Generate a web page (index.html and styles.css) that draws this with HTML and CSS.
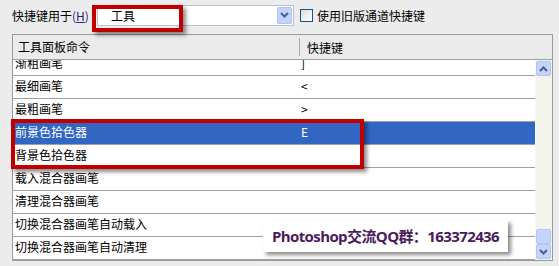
FILE: index.html
```html
<html>
<head>
  <meta charset="UTF-8">
  <title>快捷键</title>
  <link rel="stylesheet" href="styles.css">
</head>
<body>
  <div class="dialog">
    <div class="toolbar">
      <span class="label">快捷键用于<span class="mnemonic">(<u>H</u>)</span></span>
      <div class="select">
        <span class="select-value">工具</span>
        <span class="select-btn">
          <svg width="9" height="6" viewBox="0 0 9 6"><path d="M1 1 L4.5 4.5 L8 1" fill="none" stroke="#4d6185" stroke-width="2"/></svg>
        </span>
      </div>
      <label class="check"><span class="box"></span>使用旧版通道快捷键</label>
    </div>

    <div class="table">
      <div class="thead">
        <div class="col-cmd">工具面板命令</div>
        <div class="col-key">快捷键</div>
      </div>
      <div class="tbody">
        <div class="rows">
          <div class="row"><div class="col-cmd">渐粗画笔</div><div class="col-key">]</div></div>
          <div class="row"><div class="col-cmd">最细画笔</div><div class="col-key">&lt;</div></div>
          <div class="row"><div class="col-cmd">最粗画笔</div><div class="col-key">&gt;</div></div>
          <div class="row selected"><div class="col-cmd">前景色拾色器</div><div class="col-key">E</div></div>
          <div class="row"><div class="col-cmd">背景色拾色器</div><div class="col-key"></div></div>
          <div class="row"><div class="col-cmd">载入混合器画笔</div><div class="col-key"></div></div>
          <div class="row"><div class="col-cmd">清理混合器画笔</div><div class="col-key"></div></div>
          <div class="row"><div class="col-cmd">切换混合器画笔自动载入</div><div class="col-key"></div></div>
          <div class="row"><div class="col-cmd">切换混合器画笔自动清理</div><div class="col-key"></div></div>
        </div>
        <div class="scrollbar">
          <span class="sb-btn">
            <svg width="9" height="6" viewBox="0 0 9 6"><path d="M1 5 L4.5 1.5 L8 5" fill="none" stroke="#4d6185" stroke-width="2"/></svg>
          </span>
          <span class="sb-track"></span>
          <span class="sb-thumb"></span>
          <span class="sb-btn">
            <svg width="9" height="6" viewBox="0 0 9 6"><path d="M1 1 L4.5 4.5 L8 1" fill="none" stroke="#4d6185" stroke-width="2"/></svg>
          </span>
        </div>
      </div>
    </div>

    <!-- annotations drawn over the dialog -->
    <div class="mark mark-select"></div>
    <div class="mark mark-rows"></div>
    <div class="watermark">Photoshop交流QQ群：163372436</div>
  </div>
</body>
</html>
```

FILE: styles.css
```css
body {
  margin: 0;
  background-color: #ececec;
  font-family: "Noto Sans CJK SC", "DejaVu Sans", sans-serif;
  font-size: 12px;
  color: #000;
}

.dialog {
  position: relative;
  width: 559px;
  height: 266px;
  overflow: hidden;
}

.toolbar {
  display: flex;
  align-items: center;
  height: 20px;
  padding: 5px 0 9px 12px;
}

.label {
  width: 85px;
}

.mnemonic {
  color: #2a1f78;
}

.select {
  display: flex;
  width: 195px;
  height: 19px;
  border: 1px solid #b7c3d3;
  background-color: #fff;
}

.select-value {
  flex: 1;
  padding-left: 13px;
  line-height: 19px;
}

.select-btn {
  display: flex;
  align-items: center;
  justify-content: center;
  width: 15px;
  margin: 1px;
  background-color: #c3d3fd;
  border: 1px solid #b1c5f3;
  border-radius: 2px;
  box-sizing: border-box;
}

.check {
  display: flex;
  align-items: center;
  margin-left: 6px;
}

.box {
  width: 11px;
  height: 11px;
  margin-right: 4px;
  border: 1px solid #1c5180;
  background: linear-gradient(135deg, #dcdcd7, #fff);
}

.table {
  margin: 0 6px 0 12px;
  height: 225px;
  border: 1px solid #9a9a9a;
  background-color: #fff;
}

.thead {
  display: flex;
  align-items: center;
  height: 24px;
  background-color: #ebebeb;
  border-bottom: 1px solid #a0a0a0;
}

.thead .col-cmd {
  width: 281px;
  padding-left: 5px;
  border-right: 1px solid #a8a8a8;
  line-height: 18px;
}

.thead .col-key {
  padding-left: 7px;
}

.tbody {
  display: flex;
  height: 200px;
  overflow: hidden;
}

.rows {
  flex: 1;
  margin-top: -7px;
}

.row {
  display: flex;
  align-items: center;
  height: 19px;
  padding-bottom: 3px;
  border-bottom: 1px solid #a0a0a0;
}

.row .col-cmd {
  width: 285px;
  padding-left: 2px;
}

.row .col-key {
  padding-left: 1px;
}

.row.selected {
  background-color: #3166c2;
  color: #fff;
}

.scrollbar {
  display: flex;
  flex-direction: column;
  width: 15px;
  padding: 1px 1px 1px 0;
  background-color: #f4f4ef;
  border-left: 1px solid #f8f8f4;
}

.sb-btn {
  display: flex;
  align-items: center;
  justify-content: center;
  height: 15px;
  background-color: #c4d4fc;
  border: 1px solid #b4c7f2;
  border-radius: 2px;
  box-sizing: border-box;
}

.sb-track {
  flex: 1;
}

.sb-thumb {
  height: 15px;
  background-color: #c4d4fc;
  border: 1px solid #b4c7f2;
  border-radius: 2px;
  box-sizing: border-box;
}

.mark {
  position: absolute;
  border: 4px solid #c00000;
  box-shadow: 3px 3px 4px rgba(0, 0, 0, 0.45);
}

.mark-select {
  left: 92px;
  top: 5px;
  width: 83px;
  height: 19px;
}

.mark-rows {
  left: 11px;
  top: 119px;
  width: 345px;
  height: 42px;
}

.watermark {
  position: absolute;
  left: 263px;
  top: 220px;
  width: 245px;
  height: 32px;
  background-color: #fff;
  box-shadow: 3px 3px 4px rgba(0, 0, 0, 0.45);
  color: #4a1b5c;
  font-family: "Open Sans", "Noto Sans CJK SC", sans-serif;
  font-weight: bold;
  font-size: 15px;
  line-height: 32px;
  text-align: center;
  letter-spacing: -0.6px;
}
```
